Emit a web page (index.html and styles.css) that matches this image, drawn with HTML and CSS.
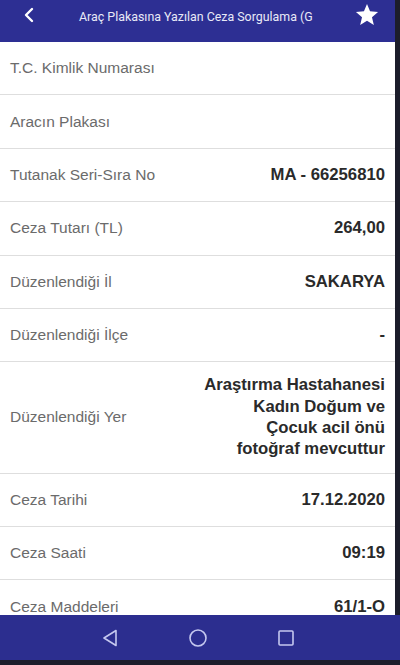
FILE: index.html
```html
<!DOCTYPE html>
<html lang="tr">
<head>
    <meta charset="UTF-8">
    <meta name="viewport" content="width=device-width, initial-scale=1.0">
    <title>Ceza Sorgulama</title>
    <link rel="stylesheet" href="styles.css">
</head>
<body>
    <div class="screen">
        <div class="app">
            <header class="topbar">
                <span class="back">
                    <svg width="14" height="16" viewBox="0 0 14 16"><path d="M9 2 L3 8 L9 14" fill="none" stroke="#fff" stroke-width="2.4" stroke-linecap="round" stroke-linejoin="round"/></svg>
                </span>
                <div class="title">Araç Plakasına Yazılan Ceza Sorgulama (G</div>
                <span class="star">
                    <svg width="26" height="26" viewBox="0 0 24 24"><path d="M12 1.8 L14.8 8.6 L22.2 9.2 L16.6 14 L18.3 21.3 L12 17.4 L5.7 21.3 L7.4 14 L1.8 9.2 L9.2 8.6 Z" fill="#fff"/></svg>
                </span>
            </header>

            <!-- sorgu sonucu -->
            <div class="list">
                <div class="row"><span class="label">T.C. Kimlik Numarası</span><span class="value"></span></div>
                <div class="row"><span class="label">Aracın Plakası</span><span class="value"></span></div>
                <div class="row"><span class="label">Tutanak Seri-Sıra No</span><span class="value">MA - 66256810</span></div>
                <div class="row"><span class="label">Ceza Tutarı (TL)</span><span class="value">264,00</span></div>
                <div class="row"><span class="label">Düzenlendiği İl</span><span class="value">SAKARYA</span></div>
                <div class="row"><span class="label">Düzenlendiği İlçe</span><span class="value">-</span></div>
                <div class="row tall"><span class="label">Düzenlendiği Yer</span><span class="value">Araştırma Hastahanesi Kadın Doğum ve Çocuk acil önü fotoğraf mevcuttur</span></div>
                <div class="row"><span class="label">Ceza Tarihi</span><span class="value">17.12.2020</span></div>
                <div class="row"><span class="label">Ceza Saati</span><span class="value">09:19</span></div>
                <div class="row"><span class="label">Ceza Maddeleri</span><span class="value">61/1-O</span></div>
            </div>
        </div>

        <nav class="navbar">
            <svg width="20" height="20" viewBox="0 0 20 20"><path d="M16 2.5 L4 10 L16 17.5 Z" fill="none" stroke="#c5c8ef" stroke-width="1.6" stroke-linejoin="round"/></svg>
            <svg width="20" height="20" viewBox="0 0 20 20"><circle cx="10" cy="10" r="8" fill="none" stroke="#c5c8ef" stroke-width="1.6"/></svg>
            <svg width="20" height="20" viewBox="0 0 20 20"><rect x="3" y="3" width="14" height="14" rx="1" fill="none" stroke="#c5c8ef" stroke-width="1.6"/></svg>
        </nav>
    </div>
</body>
</html>
```

FILE: styles.css
```css
body {
    margin: 0;
    font-family: 'Liberation Sans', Arial, sans-serif;
    background-color: #1c1d2b;
}
.screen {
    width: 400px;
    height: 665px;
    display: flex;
    flex-direction: column;
    overflow: hidden;
}
.app {
    width: 395px;
    height: 615px;
    background-color: #fff;
    overflow: hidden;
}
.topbar {
    height: 42px;
    background-color: #2d2f93;
    display: flex;
    align-items: center;
    color: #fff;
}
.back {
    width: 60px;
    display: flex;
    justify-content: center;
    margin-top: -12px;
}
.title {
    flex: 1;
    font-family: Roboto, sans-serif;
    font-size: 12.4px;
    color: #e8e9f7;
    margin-top: -10px;
    padding-left: 19px;
    white-space: nowrap;
    overflow: hidden;
}
.star {
    width: 56px;
    display: flex;
    justify-content: center;
    margin-top: -12px;
    padding-left: 4px;
}
.row {
    min-height: 52.4px;
    border-bottom: 1px solid #dedede;
    display: flex;
    align-items: center;
    justify-content: space-between;
    padding: 0 10px 0 10px;
}
.row.tall {
    padding-top: 12px;
    padding-bottom: 13px;
}
.label {
    font-size: 15.5px;
    color: #6b6b6b;
    white-space: nowrap;
}
.value {
    font-size: 16.7px;
    font-weight: bold;
    color: #2a2a2a;
    text-align: right;
}
.row.tall .value {
    width: 184px;
    line-height: 21.3px;
}
.navbar {
    width: 400px;
    height: 45px;
    background-color: #2c2e8f;
    display: flex;
    align-items: center;
    justify-content: center;
    gap: 68px;
    padding-right: 5px;
    box-sizing: border-box;
}
```
